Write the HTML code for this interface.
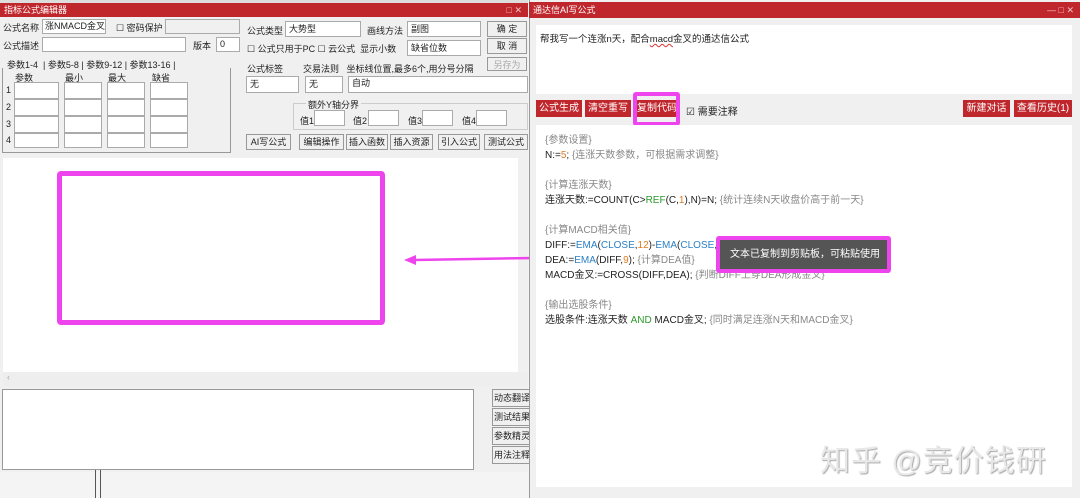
<!DOCTYPE html>
<html><head><meta charset="utf-8"><style>
*{margin:0;padding:0;box-sizing:border-box}
body{width:1080px;height:498px;overflow:hidden;background:#f4f4f4;font-family:"Liberation Sans","Noto Sans CJK SC",sans-serif;font-size:9px;color:#222;position:relative}
.a{position:absolute}
.in{position:absolute;background:#fff;border:1px solid #aaa}
.btn{position:absolute;background:#f0f0f0;border:1px solid #999;text-align:center;line-height:14px;font-size:9px}
.rb{position:absolute;background:#c0272d;color:#fff;font-size:10px;line-height:17px;text-align:center;height:17px}
.code{position:absolute;left:545px;font-size:10px;line-height:14px;height:14px;color:#222;white-space:nowrap}
.cm{color:#888}.or{color:#e07b20}.bl{color:#2b7fc4}.gr{color:#2a9a2a}
</style></head><body>
<!-- left window -->
<div class="a" style="left:0;top:0;width:528px;height:3px;background:#ddd"></div>
<div class="a" style="left:0;top:3px;width:528px;height:14px;background:#c0272d;color:#fff;font-size:9px;line-height:14px;padding-left:4px">指标公式编辑器<span style="position:absolute;right:6px;color:#f4c0c0">□ ✕</span></div>
<div class="a" style="left:0;top:17px;width:528px;height:140px;background:#f0f0f0"></div>
<div class="a" style="left:3px;top:21px">公式名称</div>
<div class="in" style="left:42px;top:19px;width:64px;height:15px;padding-left:2px;line-height:13px">涨NMACD金叉</div>
<div class="a" style="left:116px;top:21px">☐ 密码保护</div>
<div class="in" style="left:165px;top:19px;width:75px;height:15px;background:#f0f0f0"></div>
<div class="a" style="left:3px;top:39px">公式描述</div>
<div class="in" style="left:42px;top:37px;width:144px;height:15px"></div>
<div class="a" style="left:193px;top:39px">版本</div>
<div class="in" style="left:216px;top:37px;width:24px;height:15px;padding-left:3px;line-height:13px">0</div>
<div class="a" style="left:7px;top:58px">参数1-4 &nbsp;| 参数5-8 | 参数9-12 | 参数13-16 |</div>
<div class="a" style="left:2px;top:68px;width:229px;height:85px;border:1px solid #999;border-top:none"></div>
<div class="a" style="left:15px;top:71px">参数</div><div class="a" style="left:65px;top:71px">最小</div><div class="a" style="left:108px;top:71px">最大</div><div class="a" style="left:152px;top:71px">缺省</div>
<div class="a" style="left:6px;top:85px">1</div><div class="a" style="left:6px;top:102px">2</div><div class="a" style="left:6px;top:119px">3</div><div class="a" style="left:6px;top:135px">4</div>
<div class="in" style="left:14px;top:82px;width:45px;height:66px;background:repeating-linear-gradient(#fff 0 15px,#aaa 15px 17px)"></div>
<div class="in" style="left:64px;top:82px;width:38px;height:66px;background:repeating-linear-gradient(#fff 0 15px,#aaa 15px 17px)"></div>
<div class="in" style="left:107px;top:82px;width:38px;height:66px;background:repeating-linear-gradient(#fff 0 15px,#aaa 15px 17px)"></div>
<div class="in" style="left:150px;top:82px;width:38px;height:66px;background:repeating-linear-gradient(#fff 0 15px,#aaa 15px 17px)"></div>
<div class="a" style="left:247px;top:24px">公式类型</div>
<div class="in" style="left:285px;top:21px;width:76px;height:16px;padding-left:3px;line-height:14px">大势型</div>
<div class="a" style="left:367px;top:24px">画线方法</div>
<div class="in" style="left:407px;top:21px;width:74px;height:16px;padding-left:3px;line-height:14px">副图</div>
<div class="btn" style="left:487px;top:21px;width:40px;height:16px">确 定</div>
<div class="a" style="left:247px;top:42px">☐ 公式只用于PC ☐ 云公式 &nbsp;显示小数</div>
<div class="in" style="left:407px;top:40px;width:74px;height:16px;padding-left:3px;line-height:14px">缺省位数</div>
<div class="btn" style="left:487px;top:38px;width:40px;height:16px">取 消</div>
<div class="btn" style="left:487px;top:57px;width:40px;height:14px;color:#aaa">另存为</div>
<div class="a" style="left:247px;top:62px">公式标签 &nbsp; &nbsp; &nbsp; &nbsp;交易法则 &nbsp; 坐标线位置,最多6个,用分号分隔</div>
<div class="in" style="left:246px;top:76px;width:53px;height:17px;padding-left:3px;line-height:15px">无</div>
<div class="in" style="left:305px;top:76px;width:38px;height:17px;padding-left:3px;line-height:15px">无</div>
<div class="in" style="left:348px;top:76px;width:180px;height:17px;padding-left:3px;line-height:13px">自动</div>
<div class="a" style="left:293px;top:103px;width:235px;height:27px;border:1px solid #ccc"></div>
<div class="a" style="left:306px;top:98px;background:#f0f0f0;padding:0 2px">额外Y轴分界</div>
<div class="a" style="left:300px;top:114px">值1</div><div class="in" style="left:314px;top:110px;width:31px;height:16px"></div>
<div class="a" style="left:353px;top:114px">值2</div><div class="in" style="left:368px;top:110px;width:31px;height:16px"></div>
<div class="a" style="left:408px;top:114px">值3</div><div class="in" style="left:422px;top:110px;width:31px;height:16px"></div>
<div class="a" style="left:462px;top:114px">值4</div><div class="in" style="left:476px;top:110px;width:31px;height:16px"></div>
<div class="btn" style="left:246px;top:134px;width:45px;height:16px">AI写公式</div>
<div class="btn" style="left:299px;top:134px;width:45px;height:16px">编辑操作</div>
<div class="btn" style="left:346px;top:134px;width:42px;height:16px">插入函数</div>
<div class="btn" style="left:390px;top:134px;width:43px;height:16px">插入资源</div>
<div class="btn" style="left:438px;top:134px;width:42px;height:16px">引入公式</div>
<div class="btn" style="left:484px;top:134px;width:44px;height:16px">测试公式</div>
<div class="a" style="left:0;top:156px;width:528px;height:316px;background:#f0f0f0"></div>
<div class="a" style="left:3px;top:158px;width:516px;height:214px;background:#fff"></div>
<div class="a" style="left:518px;top:158px;width:10px;height:214px;background:#f0f0f0"></div>
<div class="a" style="left:3px;top:372px;width:525px;height:14px;background:#eee;color:#aaa;font-size:9px;padding-left:4px">‹</div>
<div class="a" style="left:2px;top:389px;width:472px;height:81px;background:#fff;border:1px solid #999"></div>
<div class="btn" style="left:492px;top:389px;width:40px;height:18px;line-height:16px">动态翻译</div>
<div class="btn" style="left:492px;top:408px;width:40px;height:18px;line-height:16px">测试结果</div>
<div class="btn" style="left:492px;top:427px;width:40px;height:18px;line-height:16px">参数精灵</div>
<div class="btn" style="left:492px;top:446px;width:40px;height:18px;line-height:16px">用法注释</div>
<div class="a" style="left:95px;top:470px;width:6px;height:28px;border-left:1px solid #555;border-right:1px solid #555"></div>
<div class="a" style="left:57px;top:171px;width:328px;height:154px;border:5px solid #ee44ee;border-radius:4px"></div>
<!-- arrow -->
<svg class="a" style="left:400px;top:250px" width="135" height="20"><line x1="134" y1="8" x2="14" y2="10" stroke="#ee44ee" stroke-width="2.5"/><polygon points="4,10 16,5 16,15" fill="#ee44ee"/></svg>
<!-- right window -->
<div class="a" style="left:529px;top:0;width:551px;height:498px;background:#f0f0f0;border-left:1px solid #999"></div>
<div class="a" style="left:529px;top:2px;width:551px;height:16px;background:#c0272d;color:#fff;font-size:9px;line-height:16px;padding-left:4px">通达信AI写公式<span style="position:absolute;right:6px;color:#f4c0c0">— □ ✕</span></div>
<div class="a" style="left:536px;top:25px;width:536px;height:69px;background:#fff"></div>
<div class="a" style="left:540px;top:31px;font-size:9.5px">帮我写一个连涨n天，配合<span style="text-decoration:underline wavy #d33">macd</span>金叉的通达信公式</div>
<div class="rb" style="left:536px;top:100px;width:46px">公式生成</div>
<div class="rb" style="left:585px;top:100px;width:46px">清空重写</div>
<div class="rb" style="left:636px;top:100px;width:42px">复制代码</div>
<div class="a" style="left:633px;top:92px;width:47px;height:34px;border:4px solid #ee44ee;border-radius:3px"></div>
<div class="a" style="left:686px;top:103px;font-size:10px">☑ 需要注释</div>
<div class="rb" style="left:963px;top:100px;width:47px">新建对话</div>
<div class="rb" style="left:1014px;top:100px;width:58px">查看历史(1)</div>
<div class="a" style="left:536px;top:125px;width:536px;height:362px;background:#fff"></div>
<div class="code cm" style="top:134px">{参数设置}</div>
<div class="code" style="top:149px">N:=<span class="or">5</span>; <span class="cm">{连涨天数参数，可根据需求调整}</span></div>
<div class="code cm" style="top:179px">{计算连涨天数}</div>
<div class="code" style="top:194px">连涨天数:=COUNT(C&gt;<span class="gr">REF</span>(C,<span class="or">1</span>),N)=N; <span class="cm">{统计连续N天收盘价高于前一天}</span></div>
<div class="code cm" style="top:224px">{计算MACD相关值}</div>
<div class="code" style="top:239px">DIFF:=<span class="bl">EMA</span>(<span class="bl">CLOSE</span>,<span class="or">12</span>)-<span class="bl">EMA</span>(<span class="bl">CLOSE</span>,<span class="or">26</span>); <span class="cm">{计算DIFF值}</span></div>
<div class="code" style="top:254px">DEA:=<span class="bl">EMA</span>(DIFF,<span class="or">9</span>); <span class="cm">{计算DEA值}</span></div>
<div class="code" style="top:269px">MACD金叉:=CROSS(DIFF,DEA); <span class="cm">{判断DIFF上穿DEA形成金叉}</span></div>
<div class="code cm" style="top:299px">{输出选股条件}</div>
<div class="code" style="top:314px">选股条件:连涨天数 <span class="gr">AND</span> MACD金叉; <span class="cm">{同时满足连涨N天和MACD金叉}</span></div>
<div class="a" style="left:716px;top:236px;width:175px;height:37px;background:#555;border:4px solid #ee44ee;border-radius:3px;color:#fff;font-size:10px;line-height:29px;padding-left:10px">文本已复制到剪贴板，可粘贴使用</div>
<div class="a" style="left:820px;top:436px;font-size:30px;color:#e8e8e8;text-shadow:1px 1px 1px #aaa;letter-spacing:1px">知乎 @竞价钱研</div>
</body></html>
